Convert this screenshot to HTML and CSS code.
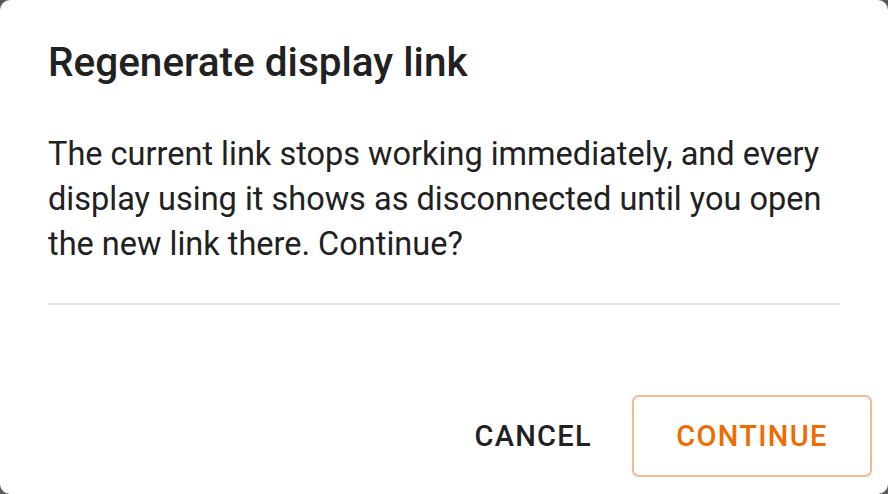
FILE: index.html
```html
<!DOCTYPE html>
<html lang="en">
<head>
    <meta charset="UTF-8">
    <meta name="viewport" content="width=device-width, initial-scale=1.0">
    <title>Regenerate display link</title>
    <link rel="stylesheet" href="styles.css">
</head>
<body>
    <div class="dialog">
        <h2 class="dialog-title">Regenerate display link</h2>
        <p class="dialog-text">The current link stops working immediately, and every display using it shows as disconnected until you open the new link there. Continue?</p>
        <hr class="divider">
        <div class="actions">
            <button class="btn btn-text">Cancel</button>
            <button class="btn btn-outline">Continue</button>
        </div>
    </div>
</body>
</html>
```

FILE: styles.css
```css
* {
    margin: 0;
    padding: 0;
    box-sizing: border-box;
}

body {
    font-family: Roboto, 'Noto Sans', Arial, sans-serif;
    background: #585858;
    width: 888px;
    height: 494px;
    overflow: hidden;
}

.dialog {
    width: 888px;
    height: 494px;
    background: white;
    border-radius: 10px;
    display: flex;
    flex-direction: column;
    padding: 38px 48px 0;
}

.dialog-title {
    font-size: 40.5px;
    line-height: 48px;
    font-weight: 500;
    color: #212121;
    margin-bottom: 46px;
}

.dialog-text {
    font-size: 32.5px;
    line-height: 45px;
    color: #212121;
    width: 792px;
}

.divider {
    border: none;
    height: 2px;
    background: #e0e0e0;
    margin-top: 36px;
}

.actions {
    margin-top: auto;
    margin-right: -32px;
    margin-bottom: 17px;
    display: flex;
    justify-content: flex-end;
    align-items: center;
    gap: 20px;
}

.btn {
    font-family: inherit;
    font-size: 29px;
    font-weight: 500;
    text-transform: uppercase;
    letter-spacing: 1.3px;
    background: none;
    border-radius: 7px;
    height: 82px;
    cursor: pointer;
}

.btn-text {
    border: none;
    color: #212121;
    padding: 0 20px;
}

.btn-outline {
    border: 2px solid #f8b690;
    color: #ef6c00;
    width: 240px;
}
```
